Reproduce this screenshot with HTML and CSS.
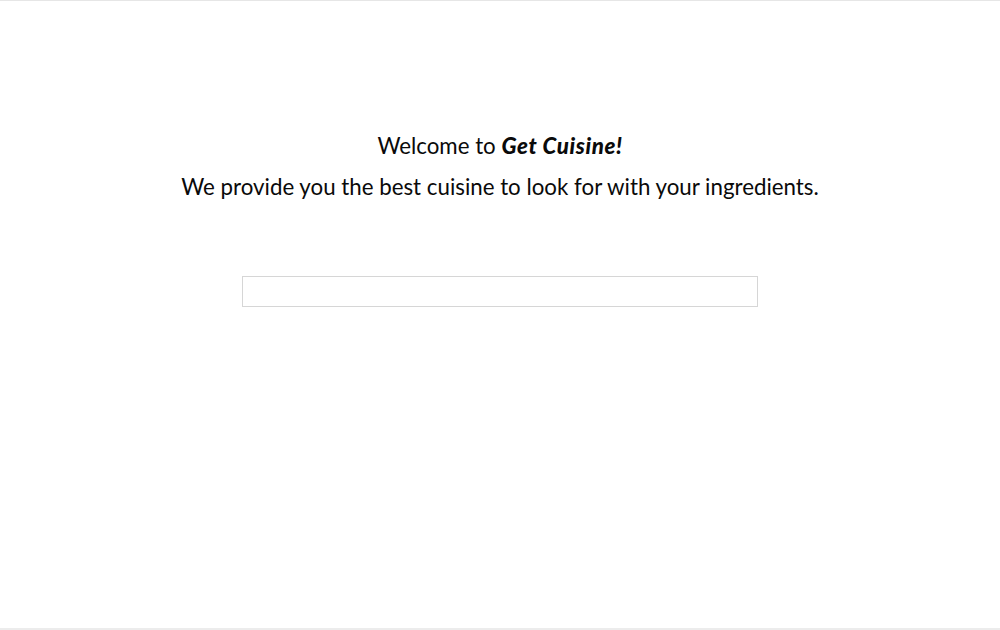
FILE: index.html
```html
<!DOCTYPE html>
<html lang="en">
<head>
<meta charset="utf-8">
<title>Get Cuisine</title>
<link rel="stylesheet" href="styles.css">
</head>
<body>
<main class="page">
  <section class="intro">
    <p class="welcome">Welcome to <strong class="brand">Get Cuisine!</strong></p>
    <p class="tagline">We provide you the best cuisine to look for with your ingredients.</p>
  </section>
  <form class="search">
    <input class="search-input" type="text" aria-label="Ingredients">
  </form>
</main>
</body>
</html>
```
FILE: styles.css
```css
html, body {
  margin: 0;
  padding: 0;
  background: #fff;
}
body {
  font-family: Lato, "Open Sans", sans-serif;
  color: #0a0a0a;
}
.page {
  box-sizing: border-box;
  height: 630px;
  border-top: 1px solid #e6e6e6;
  border-bottom: 2px solid #ececec;
  display: flex;
  flex-direction: column;
  align-items: center;
  padding-top: 124px;
}
.intro {
  text-align: center;
}
.welcome, .tagline {
  margin: 0;
  font-size: 22.3px;
  line-height: 41px;
}
.brand {
  font-weight: 900;
  font-style: italic;
  letter-spacing: 0.6px;
}
.search {
  margin-top: 69px;
}
.search-input {
  box-sizing: border-box;
  width: 516px;
  height: 31px;
  border: 1px solid #d6d6d6;
  background: #fff;
  outline: none;
  margin: 0;
  padding: 0 8px;
}
```
